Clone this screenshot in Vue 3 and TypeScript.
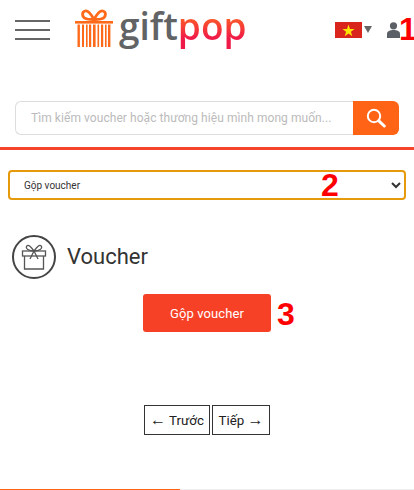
<template>
  <div class="page">
    <!-- HEADER -->
    <header class="head">
      <button class="burger" aria-label="Menu"><i></i><i></i><i></i></button>
      <div class="logo">
        <svg class="logo__icon" viewBox="0 0 38 38" width="38" height="38">
          <path d="M19 10.5 C16 5 13 1 10 2 C6.5 3 7 8 10.5 9.5 C13 10.7 16 10.5 19 10.5 C22 10.5 25 10.7 27.5 9.5 C31 8 31.5 3 28 2 C25 1 22 5 19 10.5Z" fill="none" stroke="#ff6a1a" stroke-width="2.8" />
          <rect x="0" y="12" width="38" height="2.6" fill="#ff6a1a" />
          <g fill="#ff6a1a">
            <rect v-for="b in bars" :key="b.x" :x="b.x" y="15.5" :width="b.w" height="22.5" />
          </g>
        </svg>
        <span class="logo__text"><span class="logo__gift">gift</span><span class="logo__pop">pop</span></span>
      </div>
      <div class="head__right">
        <svg class="flag" viewBox="0 0 27 16" width="27" height="16">
          <rect width="27" height="16" fill="#da251d" />
          <polygon points="13.5,2.5 15,7 19.6,7 15.9,9.8 17.3,14.2 13.5,11.5 9.7,14.2 11.1,9.8 7.4,7 12,7" fill="#ffe600" />
        </svg>
        <span class="caret"></span>
        <svg class="user" viewBox="0 0 13 16" width="13" height="16">
          <circle cx="6.5" cy="3.8" r="3.6" fill="#5b5f66" />
          <path d="M0 16 V12 C0 9 3 8 6.5 8 C10 8 13 9 13 12 V16Z" fill="#5b5f66" />
        </svg>
      </div>
      <span class="mark mark--1">1</span>
    </header>

    <!-- SEARCH -->
    <div class="search">
      <input class="search__input" placeholder="Tìm kiếm voucher hoặc thương hiệu mình mong muốn..." />
      <button class="search__btn" aria-label="Tìm kiếm">
        <svg viewBox="0 0 20 20" width="20" height="20" fill="none" stroke="#fff">
          <circle cx="8" cy="8" r="6.2" stroke-width="2" />
          <path d="M12.8 12.8 L18.3 18" stroke-width="3" stroke-linecap="round" />
        </svg>
      </button>
    </div>

    <div class="rule"></div>

    <!-- SELECT -->
    <div class="picker">
      <select class="picker__select">
        <option>Gộp voucher</option>
      </select>
      <span class="mark mark--2">2</span>
    </div>

    <!-- TITLE -->
    <div class="title">
      <span class="title__icon">
        <svg viewBox="0 0 26 26" width="26" height="26" fill="none" stroke="#555" stroke-width="1.3">
          <path d="M13 7 C10 3 7.5 0 5.8 2 C4 4.6 8 7 13 7 C18 7 22 4.6 20.2 2 C18.5 0 16 3 13 7Z" />
          <rect x="1.5" y="7" width="23" height="5" />
          <path d="M3.5 12 V25 H22.5 V12" />
          <path d="M13 7 L9 15 M13 7 L17 15" />
        </svg>
      </span>
      <h2 class="title__text">Voucher</h2>
    </div>

    <!-- ACTION -->
    <div class="action">
      <button class="action__btn">Gộp voucher</button>
      <span class="mark mark--3">3</span>
    </div>

    <!-- PAGER -->
    <div class="pager">
      <button class="pager__btn pager__btn--prev"><span class="arrow">←</span> Trước</button>
      <button class="pager__btn pager__btn--next">Tiếp <span class="arrow">→</span></button>
    </div>

    <div class="scroll"><div class="scroll__thumb"></div></div>
  </div>
</template>

<script setup lang="ts">
interface Bar {
  x: number
  w: number
}

const bars: Bar[] = [
  { x: 2.5, w: 2.4 }, { x: 7, w: 2 }, { x: 11, w: 1.6 }, { x: 14, w: 2.2 },
  { x: 18, w: 2.6 }, { x: 22.5, w: 1.6 }, { x: 26, w: 2.2 }, { x: 30, w: 1.6 }, { x: 33, w: 2.4 }
]
</script>

<style>
html, body { margin: 0; background: #fff; overflow: hidden; }
</style>

<style scoped>
.page {
  position: relative;
  width: 414px;
  height: 490px;
  overflow: hidden;
  background: #fff;
  font-family: Roboto, "Liberation Sans", sans-serif;
  color: #333;
}
button { font-family: inherit; cursor: pointer; }

/* HEADER */
.head {
  display: flex;
  align-items: center;
  height: 60px;
  padding: 0 0 0 15px;
}
.burger {
  display: flex;
  flex-direction: column;
  gap: 7px;
  width: 35px;
  padding: 0;
  border: none;
  background: none;
}
.burger i { display: block; height: 2px; background: #666; }
.logo {
  display: flex;
  align-items: center;
  margin-left: 25px;
  margin-top: -4px;
}
.logo__text {
  margin-left: 6px;
  font-family: "Open Sans", sans-serif;
  font-size: 37px;
  font-weight: 600;
  line-height: 40px;
  margin-top: -4px;
}
.logo__gift { color: #626365; }
.logo__pop {
  background: linear-gradient(#ff6a20 25%, #f01a48 75%);
  -webkit-background-clip: text;
  background-clip: text;
  color: transparent;
}
.head__right {
  display: flex;
  align-items: center;
  margin-left: auto;
  margin-right: 14px;
  margin-top: -1px;
}
.caret {
  width: 0;
  height: 0;
  margin-left: 2px;
  border-left: 4px solid transparent;
  border-right: 4px solid transparent;
  border-top: 7px solid #666;
}
.user { margin-left: 15px; }

.mark {
  position: absolute;
  font-family: "Liberation Sans", sans-serif;
  font-weight: 700;
  color: #f00;
  font-size: 32px;
  line-height: 32px;
}
.mark--1 { left: 399px; top: 13px; letter-spacing: -3px; }
.mark--2 { left: 313px; top: -1px; }
.mark--3 { left: 134px; top: 4px; }

/* SEARCH */
.search {
  display: flex;
  height: 34px;
  margin: 41px 15px 0;
}
.search__input {
  flex: 1;
  min-width: 0;
  box-sizing: border-box;
  padding: 0 15px;
  border: 1px solid #ddd;
  border-right: none;
  border-radius: 6px 0 0 6px;
  outline: none;
  font-family: inherit;
  font-size: 12px;
  letter-spacing: 0.06px;
}
.search__input::placeholder { color: #bbb; opacity: 1; }
.search__btn {
  display: flex;
  align-items: center;
  justify-content: center;
  width: 46px;
  padding: 0;
  border: none;
  border-radius: 0 6px 6px 0;
  background: #ff6316;
}
.rule { height: 3px; margin-top: 12px; background: #f4442a; }

/* SELECT */
.picker {
  position: relative;
  margin: 20px 8px 0;
}
.picker__select {
  display: block;
  box-sizing: border-box;
  width: 100%;
  height: 30px;
  padding: 0 10px;
  border: 2px solid #e59a0c;
  border-radius: 4px;
  background: #fff;
  outline: none;
  font-family: inherit;
  font-size: 10px;
  color: #333;
}

/* TITLE */
.title {
  display: flex;
  align-items: center;
  margin: 35px 12px 0;
}
.title__icon {
  display: flex;
  align-items: center;
  justify-content: center;
  box-sizing: border-box;
  width: 44px;
  height: 44px;
  border: 2px solid #444;
  border-radius: 50%;
}
.title__text {
  margin: 0 0 2px 11px;
  font-size: 22px;
  font-weight: 400;
  color: #333;
}

/* ACTION */
.action {
  position: relative;
  width: 128px;
  margin: 15px 0 0 143px;
}
.action__btn {
  display: block;
  width: 100%;
  height: 38px;
  padding: 0;
  border: none;
  border-radius: 3px;
  background: #f74126;
  color: #fff;
  font-size: 13px;
  font-weight: 400;
  letter-spacing: 0.1px;
}

/* PAGER */
.pager {
  display: flex;
  gap: 2px;
  margin: 73px 0 0 144px;
}
.pager__btn {
  box-sizing: border-box;
  height: 30px;
  padding: 0;
  border: 1px solid #333;
  background: #fff;
  color: #222;
  font-size: 13.33px;
  white-space: nowrap;
}
.arrow { font-family: "Liberation Sans", sans-serif; font-size: 16px; line-height: 1; }
.pager__btn--prev { width: 66px; }
.pager__btn--next { width: 58px; }

/* SCROLL */
.scroll {
  position: absolute;
  left: 0;
  right: 0;
  bottom: 0;
  height: 1px;
  background: #eee;
}
.scroll__thumb { width: 180px; height: 100%; background: #ff6316; }
</style>
